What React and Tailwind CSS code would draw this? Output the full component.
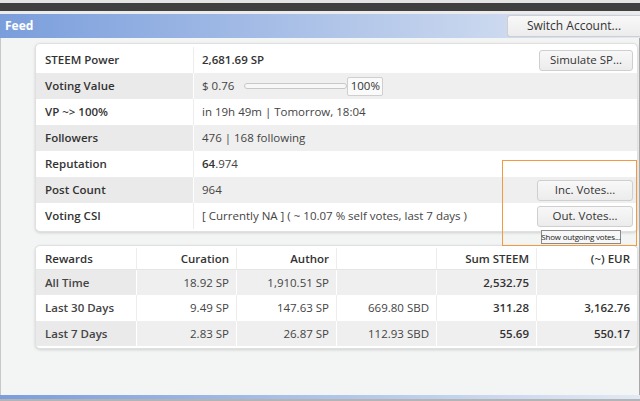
import React from "react";

const btn =
  "bg-gradient-to-b from-[#f8f8f8] to-[#ececec] border border-[#cfcfcf] rounded-[3px] text-[#333] flex items-center justify-center";

function Row({ label, gray, children }) {
  return (
    <div className={`flex h-[26px] ${gray ? "bg-[#efefef]" : "bg-white"}`}>
      <div
        className={`w-[158px] flex items-center pl-[9px] font-semibold text-[#333] border-r ${
          gray ? "bg-[#eaeaea] border-white" : "border-[#ededed]"
        }`}
      >
        {label}
      </div>
      <div className="flex-1 flex items-center pl-[8px] pr-[4px] text-[#444]">{children}</div>
    </div>
  );
}

function RRow({ cells, gray, header, h }) {
  return (
    <div className={`flex ${h} ${gray ? "bg-[#efefef]" : "bg-white"} ${header ? "border-b border-[#e6e6e6]" : ""}`}>
      {cells.map((c, i) => (
        <div
          key={i}
          className={`flex items-center ${i === 0 ? "w-[101px] pl-[9px] font-semibold text-[#333]" : "w-[100px] justify-end pr-[7px]"} ${
            i < 5 ? (gray ? "border-r border-white" : "border-r border-[#ededed]") : ""
          } ${i === 0 && gray ? "bg-[#eaeaea]" : ""} ${header || i >= 4 ? "font-semibold text-[#333]" : "text-[#444]"}`}
        >
          {c}
        </div>
      ))}
    </div>
  );
}

export default function App() {
  return (
    <div className="w-[640px] h-[401px] flex flex-col overflow-hidden bg-[#f3f4f4] font-['Open_Sans',sans-serif] text-[11.5px] relative">
      <div className="h-[3px] bg-[#e4e4e4]" />
      <div className="h-[8px] bg-[#404040]" />
      <div className="h-[3px] bg-[#ebebeb]" />
      <div className="h-[24px] flex items-center justify-between bg-gradient-to-r from-[#7a9edc] via-[#aec3e8] to-[#e2e9f4]">
        <span className="pl-[5px] text-white font-bold text-[12px]">Feed</span>
        <div className={`${btn} w-[133px] h-[22px] text-[12px] rounded-r-none border-r-0`}>Switch Account...</div>
      </div>
      <div className="flex-1 flex border-l border-[#c8c8c8]">
        <div className="flex-1 flex flex-col pl-[34px] pr-[1px]">
          <div className="mt-[5px] bg-white rounded-[5px] border border-[#e0e0e0] shadow-[0_1px_3px_rgba(0,0,0,0.15)] pt-[3px] pb-[2px]">
            <Row label="STEEM Power">
              <span className="font-semibold text-[#333]">2,681.69 SP</span>
              <div className={`${btn} ml-auto w-[94px] h-[21px]`}>Simulate SP...</div>
            </Row>
            <Row label="Voting Value" gray>
              <span>$ 0.76</span>
              <div className="ml-[10px] w-[103px] h-[6px] rounded-[3px] border border-[#c8c8c8] bg-[#f7f7f7]" />
              <div className="w-[36px] h-[19px] bg-[#fafafa] border border-[#cfcfcf] rounded-[2px] flex items-center justify-center text-[#333]">
                100%
              </div>
            </Row>
            <Row label="VP ~> 100%">in 19h 49m | Tomorrow, 18:04</Row>
            <Row label="Followers" gray>476 | 168 following</Row>
            <Row label="Reputation">
              <span>
                <span className="font-semibold text-[#333]">64</span>.974
              </span>
            </Row>
            <Row label="Post Count" gray>
              <span>964</span>
              <div className={`${btn} ml-auto w-[96px] h-[21px]`}>Inc. Votes...</div>
            </Row>
            <Row label="Voting CSI">
              <span>[ Currently NA ] ( ~ 10.07 % self votes, last 7 days )</span>
              <div className={`${btn} ml-auto w-[96px] h-[21px]`}>Out. Votes...</div>
            </Row>
          </div>
          <div className="mt-[13px] bg-white rounded-[5px] border border-[#e0e0e0] shadow-[0_1px_3px_rgba(0,0,0,0.15)] pt-[2px] pb-[2px]">
            <RRow header h="h-[22px]" cells={["Rewards", "Curation", "Author", "", "Sum STEEM", "(~) EUR"]} />
            <RRow gray h="h-[25px]" cells={["All Time", "18.92 SP", "1,910.51 SP", "", "2,532.75", ""]} />
            <RRow h="h-[26px]" cells={["Last 30 Days", "9.49 SP", "147.63 SP", "669.80 SBD", "311.28", "3,162.76"]} />
            <RRow gray h="h-[25px]" cells={["Last 7 Days", "2.83 SP", "26.87 SP", "112.93 SBD", "55.69", "550.17"]} />
          </div>
        </div>
        <div className="w-[3px] bg-[#a8a8a8]" />
      </div>
      <div className="h-[4px] bg-gradient-to-r from-[#7a9edc] via-[#aec3e8] to-[#e2e9f4]" />
      <div className="h-[2px] bg-[#b4b4b4]" />

      <div className="absolute left-[502px] top-[160px] w-[135px] h-[86px] border-[1.5px] border-[#f29a3f]" />
      <div className="absolute left-[541px] top-[230px] w-[80px] h-[14px] bg-[#f7f7f7] border border-[#8a8a8a] text-[8px] tracking-[-0.2px] whitespace-nowrap text-[#222] flex items-center justify-center leading-none">
        Show outgoing votes...
      </div>
    </div>
  );
}
